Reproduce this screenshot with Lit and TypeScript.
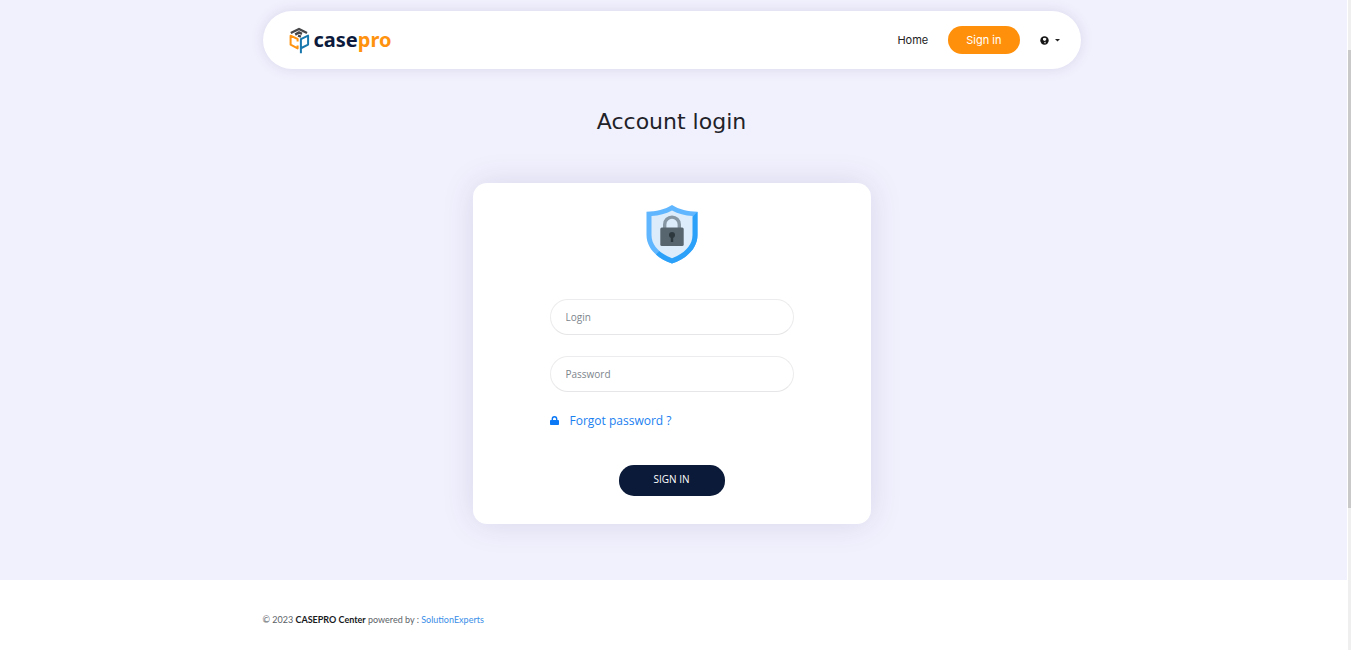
import { LitElement, html, css } from "lit";
import { customElement, state } from "lit/decorators.js";

@customElement("case-logo")
class CaseLogo extends LitElement {
  static styles = css`
    :host { display: block; }
    .brand { display: flex; align-items: center; gap: 4px; color: #0c1a3c; text-decoration: none;
      font: 700 20px/28px "Noto Sans", sans-serif; }
    .name { display: block; }
    .accent { color: #ff930f; }
    svg { display: block; }
  `;
  render() {
    return html`<a class="brand" href="#home">
      <svg width="21" height="27" viewBox="0 0 21 27" fill="none" stroke-width="2" stroke-linejoin="round" aria-hidden="true">
        <path stroke="#48484b" stroke-width="2.4" d="M1.800 6 10 2l8 4M6.200 7.600 10 5.400l3 1.400M9 8.600l3 1"/>
        <path stroke="#ff930f" d="M8.600 14.400V12L1.600 8.700v9l7 3.700v-2.800"/>
        <path stroke="#1878ad" d="M11.900 26.300V12.200l7.200-3.600v9l-6.700 3.400"/>
      </svg>
      <span class="name">case<span class="accent">pro</span></span>
    </a>`;
  }
}

@customElement("site-header")
class SiteHeader extends LitElement {
  static styles = css`
    :host { display: block; }
    .bar { display: flex; align-items: center; justify-content: space-between; height: 58px; box-sizing: border-box;
      padding: 0 21px 0 26px; border-radius: 29px; background: #fff; box-shadow: 0 0 14px rgba(40, 35, 90, 0.12); }
    .links { display: flex; align-items: center; gap: 20px; font: 400 11px/16px Inter, sans-serif; }
    .link { color: #222; text-decoration: none; }
    .signin { padding: 6px 18px; border-radius: 14px; background: #ff900b; color: #fff; text-decoration: none; }
    .lang { display: flex; align-items: center; gap: 6px; padding: 0; border: 0; background: none; color: #111; }
    .lang svg { display: block; }
  `;
  render() {
    return html`<header class="bar">
      <case-logo></case-logo>
      <nav class="links">
        <a class="link" href="#home">Home</a>
        <a class="signin" href="#signin">Sign in</a>
        <button class="lang" type="button" aria-label="Language">
          <svg width="9" height="9" viewBox="0 0 9 9" aria-hidden="true">
            <circle cx="4.5" cy="4.5" r="4.2" fill="#151515"/>
            <path d="M3 2.300l2-.5 1.500 1-.6 1.400-1.400.8-1.500-1zM4.300 6l1.400-.2-.3 1.600-.9-.2z" fill="#fff"/>
          </svg>
          <svg width="5" height="3" viewBox="0 0 5 3" aria-hidden="true"><path d="M0 0h5L2.5 2.5z" fill="#222"/></svg>
        </button>
      </nav>
    </header>`;
  }
}

@customElement("login-card")
class LoginCard extends LitElement {
  static styles = css`
    :host { display: block; width: 100%; max-width: 398px; }
    .card { display: flex; flex-direction: column; align-items: center; box-sizing: border-box; padding: 22px 24px 28px;
      border-radius: 14px; background: #fff; box-shadow: 0 0 32px rgba(40, 35, 90, 0.13); }
    .shield { display: block; }
    .form { display: flex; flex-direction: column; width: 100%; max-width: 244px; margin-top: 35px; }
    .field { display: block; margin-bottom: 21px; }
    .input { display: block; width: 100%; height: 36px; box-sizing: border-box; padding: 0 15px; border: 1px solid #ececee;
      border-bottom-color: #e6e6e8; border-radius: 18px; background: #fff; color: #333; outline: none;
      font: 400 10px/16px "Open Sans", sans-serif; }
    .input::placeholder { color: #7d858c; opacity: 1; }
    .forgot { display: flex; align-items: center; align-self: flex-start; gap: 11px; color: #1a80f0; text-decoration: none;
      font: 400 12px/16px "Open Sans", sans-serif; }
    .forgot svg { display: block; }
    .submit { align-self: center; width: 106px; height: 31px; margin-top: 36px; padding: 0 0 4px; border: 0; border-radius: 15px;
      background: #0b1a38; color: #fff; font: 400 10px/16px "Open Sans", sans-serif; }
  `;
  @state() private login = "";
  @state() private password = "";

  render() {
    return html`<section class="card">
      <svg class="shield" width="52" height="59" viewBox="0 0 52 59" aria-hidden="true">
        <path d="M26 0c7 4.400 16 6.500 25.500 6.800V30C51.500 43 41 53.500 26 58.500 11 53.500.5 43 .5 30V6.800C10 6.500 19 4.400 26 0z" fill="#60b6ff"/>
        <path d="M51.500 6.800V30C51.500 43 41 53.500 26 58.500 20 56.500 14 53.500 10 49.500z" fill="#2ba1f9"/>
        <path d="M26 5.500c6 3.300 13 5 20.500 5.600V30c0 10.500-8 18.500-20.500 23.200C13.500 48.500 5.500 40.500 5.500 30V11.100C13 10.500 20 8.800 26 5.500z" fill="#ddecfb"/>
        <path d="M18.700 23v-3.600a7.300 7.300 0 0 1 14.600 0V23" fill="none" stroke="#8798a4" stroke-width="3.400"/>
        <rect x="14.300" y="22.500" width="23.400" height="18.500" rx="1.500" fill="#56656e"/>
        <circle cx="26" cy="30" r="3" fill="#2d383e"/><path d="M24.800 30h2.400v7h-2.400z" fill="#2d383e"/>
      </svg>
      <form class="form" @submit=${(e: Event) => e.preventDefault()}>
        <label class="field">
          <input class="input" type="text" placeholder="Login" aria-label="Login" autocomplete="username" .value=${this.login}
            @input=${(e: Event) => (this.login = (e.target as HTMLInputElement).value)} />
        </label>
        <label class="field">
          <input class="input" type="password" placeholder="Password" aria-label="Password" autocomplete="current-password" .value=${this.password}
            @input=${(e: Event) => (this.password = (e.target as HTMLInputElement).value)} />
        </label>
        <a class="forgot" href="#forgot">
          <svg width="9" height="10" viewBox="0 0 9 10" aria-hidden="true">
            <path d="M2.300 4.500V3a2.200 2.200 0 0 1 4.400 0v1.500" fill="none" stroke="#0b78f5" stroke-width="1.400"/>
            <rect y="4" width="9" height="5" rx=".8" fill="#0b78f5"/>
          </svg>
          <span>Forgot password ?</span>
        </a>
        <button class="submit" type="submit">SIGN IN</button>
      </form>
    </section>`;
  }
}

@customElement("app-root")
class AppRoot extends LitElement {
  static styles = css`
    :host { display: flex; min-height: 100vh; background: #fff; }
    .page { flex: 1; display: flex; flex-direction: column; min-width: 0; }
    .hero { padding: 11px 28px 56px 24px; background: #f1f1fe; }
    .wrap { max-width: 818px; margin: 0 auto; }
    .title { margin: 37px 0 45px; text-align: center; color: #222229; font: 400 22px/32px "DejaVu Sans", sans-serif; }
    .center { display: flex; justify-content: center; }
    .footer { padding: 32px 28px 16px 24px; color: #5b6167; font: 400 9px/16px Lato, sans-serif; }
    .text { margin: 0; }
    .owner { color: #17191c; font-weight: 700; }
    .credit { color: #398ee8; text-decoration: none; }
    .track { display: flex; flex-direction: column; width: 3px; margin-left: 1px; background: #efefef; }
    .before { flex: 50; }
    .thumb { flex: 458; background: #c9c9c9; }
    .after { flex: 142; }
  `;
  render() {
    return html`<div class="page">
        <main class="hero">
          <div class="wrap">
            <site-header></site-header>
            <h1 class="title">Account login</h1>
            <div class="center"><login-card></login-card></div>
          </div>
        </main>
        <footer class="footer">
          <div class="wrap">
            <p class="text">© 2023 <span class="owner">CASEPRO Center</span> powered by : <a class="credit" href="#credit">SolutionExperts</a></p>
          </div>
        </footer>
      </div>
      <div class="track" aria-hidden="true"><div class="before"></div><div class="thumb"></div><div class="after"></div></div>`;
  }
}
